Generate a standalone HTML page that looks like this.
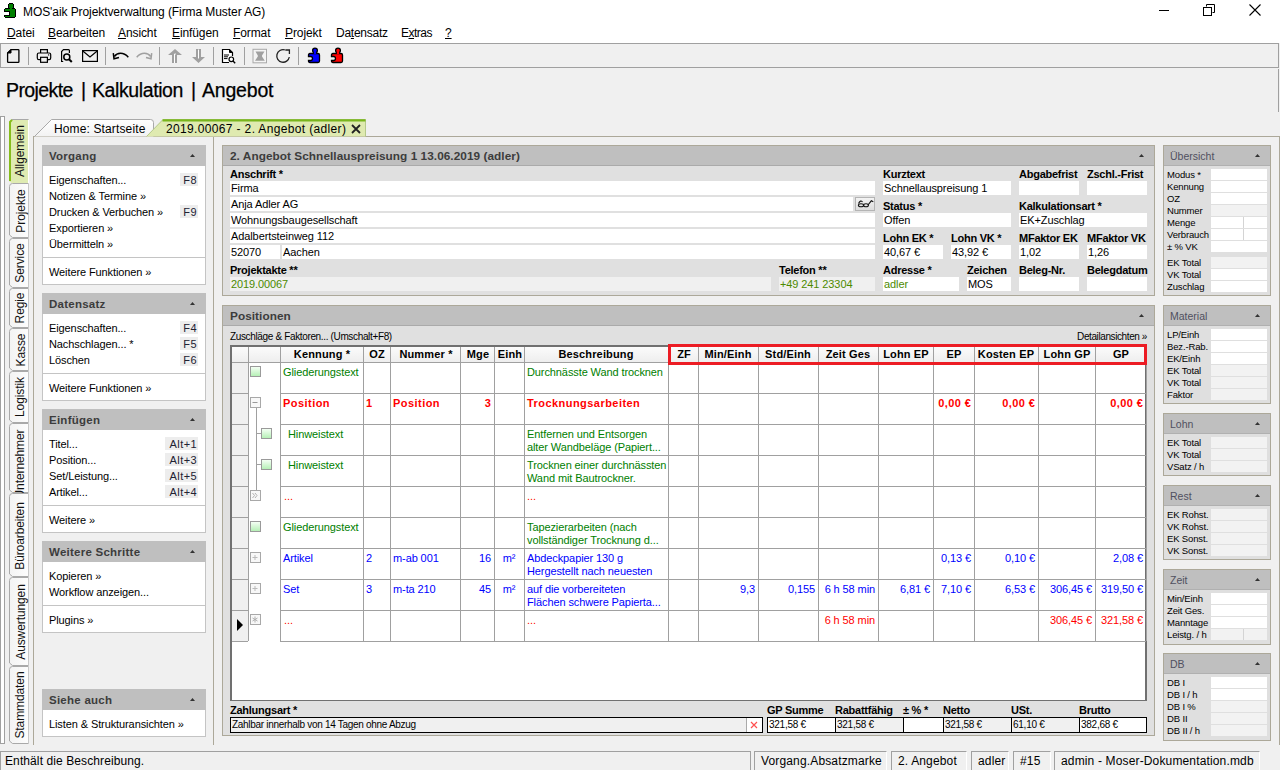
<!DOCTYPE html>
<html><head><meta charset="utf-8">
<style>
*{box-sizing:border-box;margin:0;padding:0}
html,body{width:1280px;height:770px;overflow:hidden;background:#f0f0f0;font-family:"Liberation Sans",sans-serif;font-size:11px;line-height:12px;color:#000;letter-spacing:-0.1px}
.a{position:absolute;white-space:nowrap}
.b{position:absolute}
svg{position:absolute;overflow:visible}
.hd{color:#3c3c3c}
</style></head><body>
<div class="b" style="left:0px;top:0px;width:1280px;height:23px;background:#fff"></div><div class="b" style="left:0px;top:23px;width:1280px;height:20px;background:#fff"></div><svg style="left:0px;top:0px" width="20" height="20" viewBox="0 0 20 20" shape-rendering="crispEdges">
<rect x="9" y="3" width="4" height="6" fill="#000"/><rect x="8" y="4" width="6" height="4" fill="#000"/>
<rect x="5" y="8" width="10" height="10" fill="#000"/><rect x="4" y="9" width="12" height="8" fill="#000"/>
<rect x="9" y="4" width="4" height="4" fill="#008000"/><rect x="10" y="8" width="2" height="1" fill="#008000"/>
<rect x="5" y="9" width="10" height="8" fill="#008000"/>
<rect x="4" y="11" width="6" height="5" fill="#000"/><rect x="4" y="12" width="5" height="3" fill="#fff"/>
</svg><div class="a " style="top:5px;font-size:12px;line-height:14px;left:23px;letter-spacing:-0.08px">MOS'aik Projektverwaltung (Firma Muster AG)</div><div class="b" style="left:1159px;top:10px;width:10px;height:1px;background:#000"></div><svg style="left:1203px;top:4px" width="12" height="12" viewBox="0 0 12 12"><path d="M3.5 2.5v-2h8v8h-2" fill="none" stroke="#000"/><rect x="0.5" y="3.5" width="8" height="8" fill="none" stroke="#000"/></svg><svg style="left:1249px;top:4px" width="12" height="12" viewBox="0 0 12 12"><path d="M0.5 0.5L11.5 11.5M11.5 0.5L0.5 11.5" stroke="#000" stroke-width="1.1"/></svg><div class="a " style="top:26px;font-size:12px;line-height:14px;left:7px;"><span style="text-decoration:underline;text-underline-offset:1px">D</span>atei</div><div class="a " style="top:26px;font-size:12px;line-height:14px;left:48px;"><span style="text-decoration:underline;text-underline-offset:1px">B</span>earbeiten</div><div class="a " style="top:26px;font-size:12px;line-height:14px;left:118px;"><span style="text-decoration:underline;text-underline-offset:1px">A</span>nsicht</div><div class="a " style="top:26px;font-size:12px;line-height:14px;left:172px;"><span style="text-decoration:underline;text-underline-offset:1px">E</span>infügen</div><div class="a " style="top:26px;font-size:12px;line-height:14px;left:233px;"><span style="text-decoration:underline;text-underline-offset:1px">F</span>ormat</div><div class="a " style="top:26px;font-size:12px;line-height:14px;left:285px;"><span style="text-decoration:underline;text-underline-offset:1px">P</span>rojekt</div><div class="a " style="top:26px;font-size:12px;line-height:14px;left:336px;letter-spacing:-0.25px">Da<span style="text-decoration:underline;text-underline-offset:1px">t</span>ensatz</div><div class="a " style="top:26px;font-size:12px;line-height:14px;left:401px;letter-spacing:-0.5px">E<span style="text-decoration:underline;text-underline-offset:1px">x</span>tras</div><div class="a " style="top:26px;font-size:12px;line-height:14px;left:445px;"><span style="text-decoration:underline;text-underline-offset:1px">?</span></div><div class="b" style="left:0px;top:43px;width:1280px;height:25px;background:#f0f0f0;border:1px solid #a0a0a0;border-right-color:#a0a0a0;width:1279px"></div><div class="b" style="left:28px;top:47px;width:1px;height:18px;background:#a0a0a0"></div><div class="b" style="left:105px;top:47px;width:1px;height:18px;background:#a0a0a0"></div><div class="b" style="left:159px;top:47px;width:1px;height:18px;background:#a0a0a0"></div><div class="b" style="left:213px;top:47px;width:1px;height:18px;background:#a0a0a0"></div><div class="b" style="left:244px;top:47px;width:1px;height:18px;background:#a0a0a0"></div><div class="b" style="left:298px;top:47px;width:1px;height:18px;background:#a0a0a0"></div><svg style="left:6px;top:48px" width="15" height="16" viewBox="0 0 15 16"><path d="M5 1.6H12.2Q12.9 1.6 12.9 2.3V13.7Q12.9 14.4 12.2 14.4H2.3Q1.6 14.4 1.6 13.7V5Z" fill="none" stroke="#000" stroke-width="1.3"/><path d="M1.6 5L5 1.6V5Z" fill="#000" stroke="#000" stroke-width="1"/></svg><svg style="left:36px;top:48px" width="16" height="16" viewBox="0 0 16 16"><path d="M4.6 5V1.7H11.4V5" fill="none" stroke="#000" stroke-width="1.2"/><rect x="1.3" y="5" width="13.4" height="6.6" rx="1.6" fill="none" stroke="#000" stroke-width="1.2"/><rect x="4.6" y="9.3" width="6.8" height="5" fill="#f0f0f0" stroke="#000" stroke-width="1.2"/><circle cx="12.6" cy="6.9" r="0.7" fill="#000"/></svg><svg style="left:60px;top:48px" width="14" height="16" viewBox="0 0 14 16"><path d="M3.2 13.5H1.6V3.5L3.5 1.6H8.5Q9.4 1.6 9.4 2.5V5" fill="none" stroke="#000" stroke-width="1.2"/><circle cx="6.8" cy="9" r="3" fill="none" stroke="#000" stroke-width="1.5"/><path d="M9 11.2L11.8 14" stroke="#000" stroke-width="2"/></svg><svg style="left:81px;top:49px" width="18" height="14" viewBox="0 0 18 14"><rect x="1.6" y="1.6" width="14.8" height="10.8" fill="none" stroke="#000" stroke-width="1.2"/><path d="M1.8 2L9 8L16.2 2" fill="none" stroke="#000" stroke-width="1.2"/></svg><svg style="left:112px;top:50px" width="18" height="12" viewBox="0 0 18 12"><path d="M2.3 6.5C5 2.5 11.5 1.8 16.3 7.2" fill="none" stroke="#000" stroke-width="1.5"/><path d="M1.3 3.2L2 8.8L7 7.6" fill="none" stroke="#000" stroke-width="1.5"/></svg><svg style="left:135px;top:50px" width="18" height="12" viewBox="0 0 18 12"><path d="M15.7 6.5C13 2.5 6.5 1.8 1.7 7.2" fill="none" stroke="#a0a0a0" stroke-width="1.5"/><path d="M16.7 3.2L16 8.8L11 7.6" fill="none" stroke="#a0a0a0" stroke-width="1.5"/></svg><svg style="left:160px;top:44px" width="50" height="24" viewBox="0 0 50 24"><path d="M15 5L8 11H12V19H17V11H22Z" fill="#a0a0a0"/><path d="M14.5 19V10H15.8" fill="none" stroke="#fff" stroke-width="1"/><path d="M36 5H41V13H45L38.5 19L32 13H36Z" fill="#a0a0a0"/><path d="M38.5 5.5V14.5" stroke="#fff" stroke-width="1"/></svg><svg style="left:221px;top:48px" width="16" height="16" viewBox="0 0 16 16"><path d="M8 14.5H1.5V1.5H8.5L11.5 4.5V8" fill="#fff" stroke="#000" stroke-width="1.2"/><path d="M8.5 1.5V4.5H11.5" fill="#000" stroke="#000" stroke-width="1"/><path d="M3 7h5M3 8.8h4M3 10.6h3.5" stroke="#000" stroke-width="1"/><circle cx="10.3" cy="11.3" r="2.3" fill="#fff" stroke="#000" stroke-width="1.2"/><path d="M12 13l2.2 2.2" stroke="#000" stroke-width="1.4"/></svg><svg style="left:252px;top:48px" width="16" height="16" viewBox="0 0 16 16"><rect x="1" y="1.3" width="13.5" height="13.5" fill="#f4f4f4" stroke="#a8a8a8" stroke-width="1"/><path d="M3.5 3.5H12.5L10 7.5V8.5L12.8 12.8H3L5.8 8.5V7.5Z" fill="#a0a0a0"/></svg><svg style="left:275px;top:48px" width="16" height="16" viewBox="0 0 16 16"><path d="M14.3 9A6.3 6.3 0 1 1 9.8 1.9" fill="none" stroke="#222" stroke-width="1.3"/><path d="M10.3 2H14.4V6" fill="none" stroke="#222" stroke-width="1.3"/></svg><svg style="left:307px;top:46px" width="14" height="18" viewBox="0 0 14 18"><path d="M3 7.5H11Q12.5 7.5 12.5 9V15Q12.5 16.5 11 16.5H3Q1.5 16.5 1.5 15V14.5H3.5A2 2 0 0 0 3.5 10.5H1.5V9Q1.5 7.5 3 7.5Z" fill="#0000ff" stroke="#000" stroke-width="1.3"/><circle cx="8" cy="4.5" r="2.4" fill="#0000ff" stroke="#000" stroke-width="1.3"/><rect x="6.9" y="6" width="2.2" height="2.2" fill="#0000ff"/></svg><svg style="left:330px;top:46px" width="14" height="18" viewBox="0 0 14 18"><path d="M3 7.5H11Q12.5 7.5 12.5 9V15Q12.5 16.5 11 16.5H3Q1.5 16.5 1.5 15V14.5H3.5A2 2 0 0 0 3.5 10.5H1.5V9Q1.5 7.5 3 7.5Z" fill="#ff0000" stroke="#000" stroke-width="1.3"/><circle cx="8" cy="4.5" r="2.4" fill="#ff0000" stroke="#000" stroke-width="1.3"/><rect x="6.9" y="6" width="2.2" height="2.2" fill="#ff0000"/></svg><div class="b" style="left:1278px;top:69px;width:1px;height:43px;background:#a0a0a0"></div><div class="a" style="left:6px;top:79px;font-size:19.5px;line-height:22px;-webkit-text-stroke:0.25px #000;letter-spacing:-0.6px">Projekte</div><div class="a" style="left:81px;top:79px;font-size:19.5px;line-height:22px;-webkit-text-stroke:0.25px #000;">|</div><div class="a" style="left:92px;top:79px;font-size:19.5px;line-height:22px;-webkit-text-stroke:0.25px #000;letter-spacing:-0.4px">Kalkulation</div><div class="a" style="left:191px;top:79px;font-size:19.5px;line-height:22px;-webkit-text-stroke:0.25px #000;">|</div><div class="a" style="left:202px;top:79px;font-size:19.5px;line-height:22px;-webkit-text-stroke:0.25px #000;letter-spacing:-0.2px">Angebot</div><div class="b" style="left:33px;top:136px;width:1247px;height:1px;background:#aca899"></div><div class="b" style="left:1279px;top:136px;width:1px;height:609px;background:#aca899"></div><svg style="left:30px;top:116px" width="130" height="22" viewBox="0 0 130 22">
<defs><linearGradient id="hg" x1="0" y1="0" x2="0" y2="1"><stop offset="0" stop-color="#ffffff"/><stop offset="1" stop-color="#f2f2f2"/></linearGradient></defs>
<path d="M4.5 20.5L21.5 3.5H120.5Q123.5 3.5 123.5 6.5V20.5" fill="url(#hg)" stroke="#a9a9a9" stroke-width="1"/></svg><div class="a " style="top:122px;font-size:12px;line-height:14px;left:54px;letter-spacing:0.13px">Home: Startseite</div><svg style="left:144px;top:116px" width="226" height="22" viewBox="0 0 226 22">
<path d="M2.5 20.5L19 3.5H221.5V20.5" fill="#dfeab0" stroke="#b5c98a" stroke-width="1"/>
<path d="M18.5 4.3H221.5" stroke="#79b51c" stroke-width="2.2"/></svg><div class="a " style="top:122px;font-size:12px;line-height:14px;left:166px;letter-spacing:0.35px">2019.00067 - 2. Angebot (adler)</div><svg style="left:351px;top:124px" width="10" height="10" viewBox="0 0 10 10"><path d="M1 1L9 9M9 1L1 9" stroke="#222" stroke-width="1.8"/></svg><div class="b" style="left:0px;top:116px;width:5px;height:628px;background:#fff;border:1px solid #a0a0a0"></div><div class="b" style="left:33px;top:136px;width:1px;height:609px;background:#aca899"></div><svg style="left:0px;top:119px" width="33" height="65" viewBox="0 0 33 65"><path d="M11.5 0H28.5V64H11.5L9 62V3Z" fill="#dfebb2"/><path d="M11.5 0.5H28.5" stroke="#a8a8a8"/><path d="M10 62V3L12 0.8" fill="none" stroke="#86bd1c" stroke-width="2"/><path d="M28.5 1V64" stroke="#fff"/></svg><div class="a" style="left:-12.0px;top:145.0px;width:64px;text-align:center;transform:rotate(-90deg);font-size:12px;line-height:12px;color:#111">Allgemein</div><svg style="left:0px;top:183px" width="33" height="56" viewBox="0 0 33 56"><defs><linearGradient id="vg183" x1="0" y1="0" x2="1" y2="0"><stop offset="0" stop-color="#f3f3f3"/><stop offset="1" stop-color="#fdfdfd"/></linearGradient></defs><path d="M28.5 0.5H12.5Q9.5 0.5 9.5 3.5V52L12.5 55H28.5Z" fill="url(#vg183)"/><path d="M28.5 0.5H12.5Q9.5 0.5 9.5 3.5V52L12.5 54.5H28.5" fill="none" stroke="#a9a9a9"/><path d="M28.5 1V55" stroke="#c8c8c8"/></svg><div class="a" style="left:-7.5px;top:204.5px;width:55px;text-align:center;transform:rotate(-90deg);font-size:12px;line-height:12px;color:#111">Projekte</div><svg style="left:0px;top:238px" width="33" height="51" viewBox="0 0 33 51"><defs><linearGradient id="vg238" x1="0" y1="0" x2="1" y2="0"><stop offset="0" stop-color="#f3f3f3"/><stop offset="1" stop-color="#fdfdfd"/></linearGradient></defs><path d="M28.5 0.5H12.5Q9.5 0.5 9.5 3.5V47L12.5 50H28.5Z" fill="url(#vg238)"/><path d="M28.5 0.5H12.5Q9.5 0.5 9.5 3.5V47L12.5 49.5H28.5" fill="none" stroke="#a9a9a9"/><path d="M28.5 1V50" stroke="#c8c8c8"/></svg><div class="a" style="left:-5.0px;top:257.0px;width:50px;text-align:center;transform:rotate(-90deg);font-size:12px;line-height:12px;color:#111">Service</div><svg style="left:0px;top:288px" width="33" height="41" viewBox="0 0 33 41"><defs><linearGradient id="vg288" x1="0" y1="0" x2="1" y2="0"><stop offset="0" stop-color="#f3f3f3"/><stop offset="1" stop-color="#fdfdfd"/></linearGradient></defs><path d="M28.5 0.5H12.5Q9.5 0.5 9.5 3.5V37L12.5 40H28.5Z" fill="url(#vg288)"/><path d="M28.5 0.5H12.5Q9.5 0.5 9.5 3.5V37L12.5 39.5H28.5" fill="none" stroke="#a9a9a9"/><path d="M28.5 1V40" stroke="#c8c8c8"/></svg><div class="a" style="left:0.0px;top:302.0px;width:40px;text-align:center;transform:rotate(-90deg);font-size:12px;line-height:12px;color:#111">Regie</div><svg style="left:0px;top:328px" width="33" height="44" viewBox="0 0 33 44"><defs><linearGradient id="vg328" x1="0" y1="0" x2="1" y2="0"><stop offset="0" stop-color="#f3f3f3"/><stop offset="1" stop-color="#fdfdfd"/></linearGradient></defs><path d="M28.5 0.5H12.5Q9.5 0.5 9.5 3.5V40L12.5 43H28.5Z" fill="url(#vg328)"/><path d="M28.5 0.5H12.5Q9.5 0.5 9.5 3.5V40L12.5 42.5H28.5" fill="none" stroke="#a9a9a9"/><path d="M28.5 1V43" stroke="#c8c8c8"/></svg><div class="a" style="left:-1.5px;top:343.5px;width:43px;text-align:center;transform:rotate(-90deg);font-size:12px;line-height:12px;color:#111">Kasse</div><svg style="left:0px;top:371px" width="33" height="53" viewBox="0 0 33 53"><defs><linearGradient id="vg371" x1="0" y1="0" x2="1" y2="0"><stop offset="0" stop-color="#f3f3f3"/><stop offset="1" stop-color="#fdfdfd"/></linearGradient></defs><path d="M28.5 0.5H12.5Q9.5 0.5 9.5 3.5V49L12.5 52H28.5Z" fill="url(#vg371)"/><path d="M28.5 0.5H12.5Q9.5 0.5 9.5 3.5V49L12.5 51.5H28.5" fill="none" stroke="#a9a9a9"/><path d="M28.5 1V52" stroke="#c8c8c8"/></svg><div class="a" style="left:-6.0px;top:391.0px;width:52px;text-align:center;transform:rotate(-90deg);font-size:12px;line-height:12px;color:#111">Logistik</div><svg style="left:0px;top:423px" width="33" height="71" viewBox="0 0 33 71"><defs><linearGradient id="vg423" x1="0" y1="0" x2="1" y2="0"><stop offset="0" stop-color="#f3f3f3"/><stop offset="1" stop-color="#fdfdfd"/></linearGradient></defs><path d="M28.5 0.5H12.5Q9.5 0.5 9.5 3.5V67L12.5 70H28.5Z" fill="url(#vg423)"/><path d="M28.5 0.5H12.5Q9.5 0.5 9.5 3.5V67L12.5 69.5H28.5" fill="none" stroke="#a9a9a9"/><path d="M28.5 1V70" stroke="#c8c8c8"/></svg><div class="a" style="left:-15.0px;top:458.0px;width:70px;text-align:center;transform:rotate(-90deg);font-size:12px;line-height:12px;color:#111">Unternehmer</div><svg style="left:0px;top:493px" width="33" height="85" viewBox="0 0 33 85"><defs><linearGradient id="vg493" x1="0" y1="0" x2="1" y2="0"><stop offset="0" stop-color="#f3f3f3"/><stop offset="1" stop-color="#fdfdfd"/></linearGradient></defs><path d="M28.5 0.5H12.5Q9.5 0.5 9.5 3.5V81L12.5 84H28.5Z" fill="url(#vg493)"/><path d="M28.5 0.5H12.5Q9.5 0.5 9.5 3.5V81L12.5 83.5H28.5" fill="none" stroke="#a9a9a9"/><path d="M28.5 1V84" stroke="#c8c8c8"/></svg><div class="a" style="left:-22.0px;top:530.0px;width:84px;text-align:center;transform:rotate(-90deg);font-size:12px;line-height:12px;color:#111">Büroarbeiten</div><svg style="left:0px;top:577px" width="33" height="90" viewBox="0 0 33 90"><defs><linearGradient id="vg577" x1="0" y1="0" x2="1" y2="0"><stop offset="0" stop-color="#f3f3f3"/><stop offset="1" stop-color="#fdfdfd"/></linearGradient></defs><path d="M28.5 0.5H12.5Q9.5 0.5 9.5 3.5V86L12.5 89H28.5Z" fill="url(#vg577)"/><path d="M28.5 0.5H12.5Q9.5 0.5 9.5 3.5V86L12.5 88.5H28.5" fill="none" stroke="#a9a9a9"/><path d="M28.5 1V89" stroke="#c8c8c8"/></svg><div class="a" style="left:-24.5px;top:615.5px;width:89px;text-align:center;transform:rotate(-90deg);font-size:12px;line-height:12px;color:#111">Auswertungen</div><svg style="left:0px;top:666px" width="33" height="79" viewBox="0 0 33 79"><defs><linearGradient id="vg666" x1="0" y1="0" x2="1" y2="0"><stop offset="0" stop-color="#f3f3f3"/><stop offset="1" stop-color="#fdfdfd"/></linearGradient></defs><path d="M28.5 0.5H12.5Q9.5 0.5 9.5 3.5V75L12.5 78H28.5Z" fill="url(#vg666)"/><path d="M28.5 0.5H12.5Q9.5 0.5 9.5 3.5V75L12.5 77.5H28.5" fill="none" stroke="#a9a9a9"/><path d="M28.5 1V78" stroke="#c8c8c8"/></svg><div class="a" style="left:-19.0px;top:699.0px;width:78px;text-align:center;transform:rotate(-90deg);font-size:12px;line-height:12px;color:#111">Stammdaten</div><div class="b" style="left:213px;top:137px;width:1px;height:608px;background:#aca899"></div><div class="b" style="left:42px;top:145px;width:164px;height:21px;background:#bfbfbf"></div><div class="a hd" style="top:150px;font-weight:bold;left:49px;font-size:11.5px;letter-spacing:0.25px">Vorgang</div><svg style="left:190px;top:154px" width="5" height="3" viewBox="0 0 5 3"><path d="M0 3L2.5 0 5 3z" fill="#333"/></svg><div class="b" style="left:42px;top:166px;width:164px;height:119px;background:#fff;border:1px solid #c4c4c4;border-top:0"></div><div class="a " style="top:174px;left:49px;">Eigenschaften...</div><div class="b" style="left:180px;top:173px;width:18px;height:13px;background:#ededed"></div><div class="a " style="top:174px;color:#223;left:-203px;width:400px;text-align:right;letter-spacing:0.4px">F8</div><div class="a " style="top:190px;left:49px;">Notizen &amp; Termine »</div><div class="a " style="top:206px;left:49px;">Drucken &amp; Verbuchen »</div><div class="b" style="left:180px;top:205px;width:18px;height:13px;background:#ededed"></div><div class="a " style="top:206px;color:#223;left:-203px;width:400px;text-align:right;letter-spacing:0.4px">F9</div><div class="a " style="top:222px;left:49px;">Exportieren »</div><div class="a " style="top:238px;left:49px;">Übermitteln »</div><div class="b" style="left:43px;top:257px;width:162px;height:1px;background:#c4c4c4"></div><div class="a " style="top:266px;left:49px;">Weitere Funktionen »</div><div class="b" style="left:42px;top:293px;width:164px;height:21px;background:#bfbfbf"></div><div class="a hd" style="top:298px;font-weight:bold;left:49px;font-size:11.5px;letter-spacing:0.25px">Datensatz</div><svg style="left:190px;top:302px" width="5" height="3" viewBox="0 0 5 3"><path d="M0 3L2.5 0 5 3z" fill="#333"/></svg><div class="b" style="left:42px;top:314px;width:164px;height:87px;background:#fff;border:1px solid #c4c4c4;border-top:0"></div><div class="a " style="top:322px;left:49px;">Eigenschaften...</div><div class="b" style="left:180px;top:321px;width:18px;height:13px;background:#ededed"></div><div class="a " style="top:322px;color:#223;left:-203px;width:400px;text-align:right;letter-spacing:0.4px">F4</div><div class="a " style="top:338px;left:49px;">Nachschlagen... *</div><div class="b" style="left:180px;top:337px;width:18px;height:13px;background:#ededed"></div><div class="a " style="top:338px;color:#223;left:-203px;width:400px;text-align:right;letter-spacing:0.4px">F5</div><div class="a " style="top:354px;left:49px;">Löschen</div><div class="b" style="left:180px;top:353px;width:18px;height:13px;background:#ededed"></div><div class="a " style="top:354px;color:#223;left:-203px;width:400px;text-align:right;letter-spacing:0.4px">F6</div><div class="b" style="left:43px;top:373px;width:162px;height:1px;background:#c4c4c4"></div><div class="a " style="top:382px;left:49px;">Weitere Funktionen »</div><div class="b" style="left:42px;top:409px;width:164px;height:21px;background:#bfbfbf"></div><div class="a hd" style="top:414px;font-weight:bold;left:49px;font-size:11.5px;letter-spacing:0.25px">Einfügen</div><svg style="left:190px;top:418px" width="5" height="3" viewBox="0 0 5 3"><path d="M0 3L2.5 0 5 3z" fill="#333"/></svg><div class="b" style="left:42px;top:430px;width:164px;height:103px;background:#fff;border:1px solid #c4c4c4;border-top:0"></div><div class="a " style="top:438px;left:49px;">Titel...</div><div class="b" style="left:165px;top:437px;width:33px;height:13px;background:#ededed"></div><div class="a " style="top:438px;color:#223;left:-203px;width:400px;text-align:right;letter-spacing:0.4px">Alt+1</div><div class="a " style="top:454px;left:49px;">Position...</div><div class="b" style="left:165px;top:453px;width:33px;height:13px;background:#ededed"></div><div class="a " style="top:454px;color:#223;left:-203px;width:400px;text-align:right;letter-spacing:0.4px">Alt+3</div><div class="a " style="top:470px;left:49px;">Set/Leistung...</div><div class="b" style="left:165px;top:469px;width:33px;height:13px;background:#ededed"></div><div class="a " style="top:470px;color:#223;left:-203px;width:400px;text-align:right;letter-spacing:0.4px">Alt+5</div><div class="a " style="top:486px;left:49px;">Artikel...</div><div class="b" style="left:165px;top:485px;width:33px;height:13px;background:#ededed"></div><div class="a " style="top:486px;color:#223;left:-203px;width:400px;text-align:right;letter-spacing:0.4px">Alt+4</div><div class="b" style="left:43px;top:505px;width:162px;height:1px;background:#c4c4c4"></div><div class="a " style="top:514px;left:49px;">Weitere »</div><div class="b" style="left:42px;top:541px;width:164px;height:21px;background:#bfbfbf"></div><div class="a hd" style="top:546px;font-weight:bold;left:49px;font-size:11.5px;letter-spacing:0.25px">Weitere Schritte</div><svg style="left:190px;top:550px" width="5" height="3" viewBox="0 0 5 3"><path d="M0 3L2.5 0 5 3z" fill="#333"/></svg><div class="b" style="left:42px;top:562px;width:164px;height:71px;background:#fff;border:1px solid #c4c4c4;border-top:0"></div><div class="a " style="top:570px;left:49px;">Kopieren »</div><div class="a " style="top:586px;left:49px;">Workflow anzeigen...</div><div class="b" style="left:43px;top:605px;width:162px;height:1px;background:#c4c4c4"></div><div class="a " style="top:614px;left:49px;">Plugins »</div><div class="b" style="left:42px;top:689px;width:164px;height:21px;background:#bfbfbf"></div><div class="a hd" style="top:694px;font-weight:bold;left:49px;font-size:11.5px;letter-spacing:0.25px">Siehe auch</div><svg style="left:190px;top:698px" width="5" height="3" viewBox="0 0 5 3"><path d="M0 3L2.5 0 5 3z" fill="#333"/></svg><div class="b" style="left:42px;top:710px;width:164px;height:27px;background:#fff;border:1px solid #c4c4c4;border-top:0"></div><div class="a " style="top:718px;left:49px;">Listen &amp; Strukturansichten »</div><div class="b" style="left:0px;top:750px;width:1280px;height:20px;background:#f0f0f0"></div><div class="b" style="left:0px;top:751px;width:751px;height:19px;border-top:1px solid #a0a0a0;border-left:1px solid #a0a0a0;border-right:1px solid #a0a0a0"></div><div class="a " style="top:754px;font-size:12px;line-height:14px;left:5px;letter-spacing:0.1px">Enthält die Beschreibung.</div><div class="b" style="left:754px;top:751px;width:133px;height:19px;border-top:1px solid #a0a0a0;border-left:1px solid #a0a0a0;border-right:1px solid #fff"></div><div class="a " style="top:754px;font-size:12px;line-height:14px;left:761px;letter-spacing:0.15px">Vorgang.Absatzmarke</div><div class="b" style="left:891px;top:751px;width:76px;height:19px;border-top:1px solid #a0a0a0;border-left:1px solid #a0a0a0;border-right:1px solid #fff"></div><div class="a " style="top:754px;font-size:12px;line-height:14px;left:898px;letter-spacing:0.15px">2. Angebot</div><div class="b" style="left:971px;top:751px;width:38px;height:19px;border-top:1px solid #a0a0a0;border-left:1px solid #a0a0a0;border-right:1px solid #fff"></div><div class="a " style="top:754px;font-size:12px;line-height:14px;left:978px;letter-spacing:0.15px">adler</div><div class="b" style="left:1013px;top:751px;width:38px;height:19px;border-top:1px solid #a0a0a0;border-left:1px solid #a0a0a0;border-right:1px solid #fff"></div><div class="a " style="top:754px;font-size:12px;line-height:14px;left:1020px;letter-spacing:0.15px">#15</div><div class="b" style="left:1054px;top:751px;width:206px;height:19px;border-top:1px solid #a0a0a0;border-left:1px solid #a0a0a0;border-right:1px solid #fff"></div><div class="a " style="top:754px;font-size:12px;line-height:14px;left:1061px;letter-spacing:0.15px">admin - Moser-Dokumentation.mdb</div><div class="b" style="left:222px;top:145px;width:933px;height:151px;background:#e0e0e0;border:1px solid #aca899"></div><div class="b" style="left:223px;top:146px;width:931px;height:20px;background:#bfbfbf;border-bottom:1px solid #aaa"></div><div class="a hd" style="top:150px;font-weight:bold;left:230px;font-size:11.8px;letter-spacing:0.05px">2. Angebot Schnellauspreisung 1 13.06.2019 (adler)</div><svg style="left:1139px;top:154px" width="5" height="3" viewBox="0 0 5 3"><path d="M0 3L2.5 0 5 3z" fill="#333"/></svg><div class="a " style="top:168px;font-weight:bold;left:230px;letter-spacing:-0.25px">Anschrift *</div><div class="b" style="left:230px;top:181px;width:645px;height:14px;background:#fff;"></div><div class="a " style="top:182px;color:#000;left:231px;">Firma</div><div class="b" style="left:230px;top:197px;width:623px;height:14px;background:#fff;"></div><div class="a " style="top:198px;color:#000;left:231px;">Anja Adler AG</div><svg style="left:855px;top:197px" width="20" height="14" viewBox="0 0 20 14">
<defs><linearGradient id="bg1" x1="0" y1="0" x2="0" y2="1"><stop offset="0" stop-color="#f4f4f4"/><stop offset="1" stop-color="#dcdcdc"/></linearGradient></defs>
<rect x="0.5" y="0.5" width="19" height="13" fill="url(#bg1)" stroke="#b4b4b4"/>
<path d="M3.5 6.5Q5.5 2.5 7.5 5" fill="none" stroke="#111" stroke-width="1.1"/><ellipse cx="6" cy="8.3" rx="2.6" ry="1.5" fill="none" stroke="#111" stroke-width="1.1"/><ellipse cx="11" cy="8.3" rx="2.4" ry="1.5" fill="none" stroke="#111" stroke-width="1.1"/><path d="M13 8L16.3 3.8L18.3 4.8" fill="none" stroke="#111" stroke-width="1.1"/></svg><div class="b" style="left:230px;top:213px;width:645px;height:14px;background:#fff;"></div><div class="a " style="top:214px;color:#000;left:231px;">Wohnungsbaugesellschaft</div><div class="b" style="left:230px;top:229px;width:645px;height:14px;background:#fff;"></div><div class="a " style="top:230px;color:#000;left:231px;">Adalbertsteinweg 112</div><div class="b" style="left:230px;top:245px;width:50px;height:14px;background:#fff;"></div><div class="a " style="top:246px;color:#000;left:231px;">52070</div><div class="b" style="left:282px;top:245px;width:593px;height:14px;background:#fff;"></div><div class="a " style="top:246px;color:#000;left:283px;">Aachen</div><div class="a " style="top:264px;font-weight:bold;left:230px;letter-spacing:-0.25px">Projektakte **</div><div class="b" style="left:230px;top:277px;width:541px;height:14px;background:#f0f0f0;"></div><div class="a " style="top:278px;color:#4d8a00;left:231px;">2019.00067</div><div class="a " style="top:264px;font-weight:bold;left:779px;letter-spacing:-0.25px">Telefon **</div><div class="b" style="left:779px;top:277px;width:96px;height:14px;background:#f0f0f0;"></div><div class="a " style="top:278px;color:#4d8a00;left:780px;">+49 241 23304</div><div class="a " style="top:168px;font-weight:bold;left:883px;letter-spacing:-0.25px">Kurztext</div><div class="b" style="left:883px;top:181px;width:128px;height:14px;background:#fff;"></div><div class="a " style="top:182px;color:#000;left:884px;">Schnellauspreisung 1</div><div class="a " style="top:168px;font-weight:bold;left:1019px;letter-spacing:-0.25px">Abgabefrist</div><div class="b" style="left:1019px;top:181px;width:60px;height:14px;background:#fff;"></div><div class="a " style="top:168px;font-weight:bold;left:1087px;letter-spacing:-0.25px">Zschl.-Frist</div><div class="b" style="left:1087px;top:181px;width:60px;height:14px;background:#fff;"></div><div class="a " style="top:200px;font-weight:bold;left:883px;letter-spacing:-0.25px">Status *</div><div class="b" style="left:883px;top:213px;width:128px;height:14px;background:#fff;"></div><div class="a " style="top:214px;color:#000;left:884px;">Offen</div><div class="a " style="top:200px;font-weight:bold;left:1019px;letter-spacing:-0.25px">Kalkulationsart *</div><div class="b" style="left:1019px;top:213px;width:128px;height:14px;background:#fff;"></div><div class="a " style="top:214px;color:#000;left:1020px;">EK+Zuschlag</div><div class="a " style="top:232px;font-weight:bold;left:883px;letter-spacing:-0.25px">Lohn EK *</div><div class="b" style="left:883px;top:245px;width:60px;height:14px;background:#fff;"></div><div class="a " style="top:246px;color:#000;left:884px;">40,67 €</div><div class="a " style="top:232px;font-weight:bold;left:951px;letter-spacing:-0.25px">Lohn VK *</div><div class="b" style="left:951px;top:245px;width:60px;height:14px;background:#fff;"></div><div class="a " style="top:246px;color:#000;left:952px;">43,92 €</div><div class="a " style="top:232px;font-weight:bold;left:1019px;letter-spacing:-0.25px">MFaktor EK</div><div class="b" style="left:1019px;top:245px;width:60px;height:14px;background:#fff;"></div><div class="a " style="top:246px;color:#000;left:1020px;">1,02</div><div class="a " style="top:232px;font-weight:bold;left:1087px;letter-spacing:-0.25px">MFaktor VK</div><div class="b" style="left:1087px;top:245px;width:60px;height:14px;background:#fff;"></div><div class="a " style="top:246px;color:#000;left:1088px;">1,26</div><div class="a " style="top:264px;font-weight:bold;left:883px;letter-spacing:-0.25px">Adresse *</div><div class="b" style="left:883px;top:277px;width:76px;height:14px;background:#fff;"></div><div class="a " style="top:278px;color:#4d8a00;left:884px;">adler</div><div class="a " style="top:264px;font-weight:bold;left:967px;letter-spacing:-0.25px">Zeichen</div><div class="b" style="left:967px;top:277px;width:44px;height:14px;background:#fff;"></div><div class="a " style="top:278px;color:#000;left:968px;">MOS</div><div class="a " style="top:264px;font-weight:bold;left:1019px;letter-spacing:-0.25px">Beleg-Nr.</div><div class="b" style="left:1019px;top:277px;width:60px;height:14px;background:#fff;"></div><div class="a " style="top:264px;font-weight:bold;left:1087px;letter-spacing:-0.25px">Belegdatum</div><div class="b" style="left:1087px;top:277px;width:60px;height:14px;background:#fff;"></div><div class="b" style="left:222px;top:305px;width:933px;height:431px;background:#e0e0e0;border:1px solid #aca899"></div><div class="b" style="left:223px;top:306px;width:931px;height:20px;background:#bfbfbf;border-bottom:1px solid #aaa"></div><div class="a hd" style="top:310px;font-weight:bold;left:230px;font-size:11.8px;letter-spacing:0.05px">Positionen</div><svg style="left:1139px;top:314px" width="5" height="3" viewBox="0 0 5 3"><path d="M0 3L2.5 0 5 3z" fill="#333"/></svg><div class="a " style="top:331px;left:230px;font-size:10px;letter-spacing:-0.35px">Zuschläge &amp; Faktoren... (Umschalt+F8)</div><div class="a " style="top:331px;left:747px;width:400px;text-align:right;font-size:10px;letter-spacing:-0.4px">Detailansichten »</div><div class="b" style="left:230px;top:345px;width:917px;height:356px;background:#fff;border:2px solid #707070;border-bottom:1px solid #707070"></div><div class="b" style="left:232px;top:347px;width:16px;height:294px;background:#f0f0f0"></div><div class="b" style="left:232px;top:347px;width:914px;height:15px;background:linear-gradient(#fbfbfb,#eeeeee)"></div><div class="b" style="left:248px;top:347px;width:1px;height:294px;background:#a0a0a0"></div><div class="b" style="left:280px;top:347px;width:1px;height:294px;background:#a0a0a0"></div><div class="b" style="left:363px;top:347px;width:1px;height:294px;background:#a0a0a0"></div><div class="b" style="left:390px;top:347px;width:1px;height:294px;background:#a0a0a0"></div><div class="b" style="left:460px;top:347px;width:1px;height:294px;background:#a0a0a0"></div><div class="b" style="left:494px;top:347px;width:1px;height:294px;background:#a0a0a0"></div><div class="b" style="left:524px;top:347px;width:1px;height:294px;background:#a0a0a0"></div><div class="b" style="left:668px;top:347px;width:1px;height:294px;background:#a0a0a0"></div><div class="b" style="left:698px;top:347px;width:1px;height:294px;background:#a0a0a0"></div><div class="b" style="left:758px;top:347px;width:1px;height:294px;background:#a0a0a0"></div><div class="b" style="left:818px;top:347px;width:1px;height:294px;background:#a0a0a0"></div><div class="b" style="left:878px;top:347px;width:1px;height:294px;background:#a0a0a0"></div><div class="b" style="left:933px;top:347px;width:1px;height:294px;background:#a0a0a0"></div><div class="b" style="left:974px;top:347px;width:1px;height:294px;background:#a0a0a0"></div><div class="b" style="left:1038px;top:347px;width:1px;height:294px;background:#a0a0a0"></div><div class="b" style="left:1095px;top:347px;width:1px;height:294px;background:#a0a0a0"></div><div class="b" style="left:1146px;top:347px;width:1px;height:294px;background:#a0a0a0"></div><div class="b" style="left:232px;top:362px;width:914px;height:1px;background:#a0a0a0"></div><div class="b" style="left:232px;top:393px;width:16px;height:1px;background:#a0a0a0"></div><div class="b" style="left:280px;top:393px;width:866px;height:1px;background:#a0a0a0"></div><div class="b" style="left:232px;top:424px;width:16px;height:1px;background:#a0a0a0"></div><div class="b" style="left:280px;top:424px;width:866px;height:1px;background:#a0a0a0"></div><div class="b" style="left:232px;top:455px;width:16px;height:1px;background:#a0a0a0"></div><div class="b" style="left:280px;top:455px;width:866px;height:1px;background:#a0a0a0"></div><div class="b" style="left:232px;top:486px;width:16px;height:1px;background:#a0a0a0"></div><div class="b" style="left:280px;top:486px;width:866px;height:1px;background:#a0a0a0"></div><div class="b" style="left:232px;top:517px;width:16px;height:1px;background:#a0a0a0"></div><div class="b" style="left:280px;top:517px;width:866px;height:1px;background:#a0a0a0"></div><div class="b" style="left:232px;top:548px;width:16px;height:1px;background:#a0a0a0"></div><div class="b" style="left:280px;top:548px;width:866px;height:1px;background:#a0a0a0"></div><div class="b" style="left:232px;top:579px;width:16px;height:1px;background:#a0a0a0"></div><div class="b" style="left:280px;top:579px;width:866px;height:1px;background:#a0a0a0"></div><div class="b" style="left:232px;top:610px;width:16px;height:1px;background:#a0a0a0"></div><div class="b" style="left:280px;top:610px;width:866px;height:1px;background:#a0a0a0"></div><div class="b" style="left:232px;top:641px;width:16px;height:1px;background:#a0a0a0"></div><div class="b" style="left:280px;top:641px;width:866px;height:1px;background:#a0a0a0"></div><div class="a " style="top:348px;font-weight:bold;left:122px;width:400px;text-align:center;letter-spacing:0.15px">Kennung *</div><div class="a " style="top:348px;font-weight:bold;left:177px;width:400px;text-align:center;letter-spacing:0.15px">OZ</div><div class="a " style="top:348px;font-weight:bold;left:226px;width:400px;text-align:center;letter-spacing:0.15px">Nummer *</div><div class="a " style="top:348px;font-weight:bold;left:278px;width:400px;text-align:center;letter-spacing:0.15px">Mge</div><div class="a " style="top:348px;font-weight:bold;left:310px;width:400px;text-align:center;letter-spacing:0.15px">Einh</div><div class="a " style="top:348px;font-weight:bold;left:396px;width:400px;text-align:center;letter-spacing:0.15px">Beschreibung</div><div class="a " style="top:348px;font-weight:bold;left:484px;width:400px;text-align:center;letter-spacing:0.15px">ZF</div><div class="a " style="top:348px;font-weight:bold;left:528px;width:400px;text-align:center;letter-spacing:0.15px">Min/Einh</div><div class="a " style="top:348px;font-weight:bold;left:588px;width:400px;text-align:center;letter-spacing:0.15px">Std/Einh</div><div class="a " style="top:348px;font-weight:bold;left:648px;width:400px;text-align:center;letter-spacing:0.15px">Zeit Ges</div><div class="a " style="top:348px;font-weight:bold;left:706px;width:400px;text-align:center;letter-spacing:0.15px">Lohn EP</div><div class="a " style="top:348px;font-weight:bold;left:754px;width:400px;text-align:center;letter-spacing:0.15px">EP</div><div class="a " style="top:348px;font-weight:bold;left:806px;width:400px;text-align:center;letter-spacing:0.15px">Kosten EP</div><div class="a " style="top:348px;font-weight:bold;left:867px;width:400px;text-align:center;letter-spacing:0.15px">Lohn GP</div><div class="a " style="top:348px;font-weight:bold;left:921px;width:400px;text-align:center;letter-spacing:0.15px">GP</div><div class="b" style="left:668px;top:344px;width:479px;height:21px;border:3px solid #ec1c24"></div><div class="b" style="left:256px;top:408px;width:1px;height:83px;background:#a0a0a0"></div><div class="b" style="left:257px;top:433px;width:4px;height:1px;background:#a0a0a0"></div><div class="b" style="left:257px;top:464px;width:4px;height:1px;background:#a0a0a0"></div><div class="b" style="left:250px;top:366px;width:11px;height:11px;border:1px solid #9a9a9a;background:linear-gradient(#f4fff4,#b6f0b6)"></div><svg style="left:250px;top:397px" width="11" height="11" viewBox="0 0 11 11"><rect x="0.5" y="0.5" width="10" height="10" fill="#f8f8f8" stroke="#a8a8a8"/><path d="M2.5 5.5h5" stroke="#999"/></svg><div class="b" style="left:261px;top:428px;width:11px;height:11px;border:1px solid #9a9a9a;background:linear-gradient(#f4fff4,#b6f0b6)"></div><div class="b" style="left:261px;top:459px;width:11px;height:11px;border:1px solid #9a9a9a;background:linear-gradient(#f4fff4,#b6f0b6)"></div><svg style="left:250px;top:490px" width="11" height="11" viewBox="0 0 11 11"><rect x="0.5" y="0.5" width="10" height="10" fill="#f8f8f8" stroke="#a8a8a8"/><path d="M2.5 3l2 2.5-2 2.5M5 3l2 2.5-2 2.5" fill="none" stroke="#aaa" stroke-width="0.9"/></svg><div class="b" style="left:250px;top:521px;width:11px;height:11px;border:1px solid #9a9a9a;background:linear-gradient(#f4fff4,#b6f0b6)"></div><svg style="left:250px;top:552px" width="11" height="11" viewBox="0 0 11 11"><rect x="0.5" y="0.5" width="10" height="10" fill="#f8f8f8" stroke="#a8a8a8"/><path d="M2.5 5.5h5M5 3v5" stroke="#bbb"/></svg><svg style="left:250px;top:583px" width="11" height="11" viewBox="0 0 11 11"><rect x="0.5" y="0.5" width="10" height="10" fill="#f8f8f8" stroke="#a8a8a8"/><path d="M2.5 5.5h5M5 3v5" stroke="#bbb"/></svg><svg style="left:250px;top:614px" width="11" height="11" viewBox="0 0 11 11"><rect x="0.5" y="0.5" width="10" height="10" fill="#f8f8f8" stroke="#a8a8a8"/><path d="M5 2.5v6M2.5 4l5 3M7.5 4l-5 3" stroke="#aaa" stroke-width="0.9"/></svg><svg style="left:237px;top:619px" width="6" height="12" viewBox="0 0 6 12"><path d="M0 0L6 6 0 12z" fill="#000"/></svg><div class="a " style="top:366px;color:#008000;left:283px;">Gliederungstext</div><div class="a " style="top:366px;color:#008000;left:527px;">Durchnässte Wand trocknen</div><div class="a " style="top:397px;font-weight:bold;color:#ff0000;left:283px;letter-spacing:0.45px;">Position</div><div class="a " style="top:397px;font-weight:bold;color:#ff0000;left:366px;letter-spacing:0.45px;">1</div><div class="a " style="top:397px;font-weight:bold;color:#ff0000;left:393px;letter-spacing:0.45px;">Position</div><div class="a " style="top:397px;font-weight:bold;color:#ff0000;left:91.44999999999999px;width:400px;text-align:right;letter-spacing:0.45px;">3</div><div class="a " style="top:397px;font-weight:bold;color:#ff0000;left:527px;letter-spacing:0.45px;">Trocknungsarbeiten</div><div class="a " style="top:397px;font-weight:bold;color:#ff0000;left:571.45px;width:400px;text-align:right;letter-spacing:0.45px;">0,00 €</div><div class="a " style="top:397px;font-weight:bold;color:#ff0000;left:635.45px;width:400px;text-align:right;letter-spacing:0.45px;">0,00 €</div><div class="a " style="top:397px;font-weight:bold;color:#ff0000;left:743.45px;width:400px;text-align:right;letter-spacing:0.45px;">0,00 €</div><div class="a " style="top:428px;color:#008000;left:288px;">Hinweistext</div><div class="a " style="top:428px;color:#008000;left:527px;">Entfernen und Entsorgen</div><div class="a " style="top:441px;color:#008000;left:527px;">alter Wandbeläge (Papiert...</div><div class="a " style="top:459px;color:#008000;left:288px;">Hinweistext</div><div class="a " style="top:459px;color:#008000;left:527px;">Trocknen einer durchnässten</div><div class="a " style="top:472px;color:#008000;left:527px;">Wand mit Bautrockner.</div><div class="a " style="top:490px;color:#ff0000;left:284px;">...</div><div class="a " style="top:490px;color:#ff0000;left:527px;">...</div><div class="a " style="top:521px;color:#008000;left:283px;">Gliederungstext</div><div class="a " style="top:521px;color:#008000;left:527px;">Tapezierarbeiten (nach</div><div class="a " style="top:534px;color:#008000;left:527px;">vollständiger Trocknung d...</div><div class="a " style="top:552px;color:#0000ff;left:283px;">Artikel</div><div class="a " style="top:552px;color:#0000ff;left:366px;">2</div><div class="a " style="top:552px;color:#0000ff;left:393px;">m-ab 001</div><div class="a " style="top:552px;color:#0000ff;left:91px;width:400px;text-align:right;">16</div><div class="a " style="top:552px;color:#0000ff;left:309px;width:400px;text-align:center;">m²</div><div class="a " style="top:552px;color:#0000ff;left:527px;">Abdeckpapier 130 g</div><div class="a " style="top:565px;color:#0000ff;left:527px;">Hergestellt nach neuesten</div><div class="a " style="top:552px;color:#0000ff;left:571px;width:400px;text-align:right;">0,13 €</div><div class="a " style="top:552px;color:#0000ff;left:635px;width:400px;text-align:right;">0,10 €</div><div class="a " style="top:552px;color:#0000ff;left:743px;width:400px;text-align:right;">2,08 €</div><div class="a " style="top:583px;color:#0000ff;left:283px;">Set</div><div class="a " style="top:583px;color:#0000ff;left:366px;">3</div><div class="a " style="top:583px;color:#0000ff;left:393px;">m-ta 210</div><div class="a " style="top:583px;color:#0000ff;left:91px;width:400px;text-align:right;">45</div><div class="a " style="top:583px;color:#0000ff;left:309px;width:400px;text-align:center;">m²</div><div class="a " style="top:583px;color:#0000ff;left:527px;">auf die vorbereiteten</div><div class="a " style="top:596px;color:#0000ff;left:527px;">Flächen schwere Papierta...</div><div class="a " style="top:583px;color:#0000ff;left:355px;width:400px;text-align:right;">9,3</div><div class="a " style="top:583px;color:#0000ff;left:415px;width:400px;text-align:right;">0,155</div><div class="a " style="top:583px;color:#0000ff;left:475px;width:400px;text-align:right;">6 h 58 min</div><div class="a " style="top:583px;color:#0000ff;left:530px;width:400px;text-align:right;">6,81 €</div><div class="a " style="top:583px;color:#0000ff;left:571px;width:400px;text-align:right;">7,10 €</div><div class="a " style="top:583px;color:#0000ff;left:635px;width:400px;text-align:right;">6,53 €</div><div class="a " style="top:583px;color:#0000ff;left:692px;width:400px;text-align:right;">306,45 €</div><div class="a " style="top:583px;color:#0000ff;left:743px;width:400px;text-align:right;">319,50 €</div><div class="a " style="top:614px;color:#ff0000;left:284px;">...</div><div class="a " style="top:614px;color:#ff0000;left:527px;">...</div><div class="a " style="top:614px;color:#ff0000;left:475px;width:400px;text-align:right;">6 h 58 min</div><div class="a " style="top:614px;color:#ff0000;left:692px;width:400px;text-align:right;">306,45 €</div><div class="a " style="top:614px;color:#ff0000;left:743px;width:400px;text-align:right;">321,58 €</div><div class="a " style="top:704px;font-weight:bold;left:230px;letter-spacing:-0.25px">Zahlungsart *</div><div class="b" style="left:230px;top:717px;width:533px;height:16px;background:#f0f0f0;border:1px solid #000"></div><div class="b" style="left:746px;top:718px;width:16px;height:14px;background:#fff;border-left:1px solid #aaa"></div><svg style="left:750px;top:721px" width="8" height="8" viewBox="0 0 8 8"><path d="M1 1L7 7M7 1L1 7" stroke="#ff5050" stroke-width="1.2"/></svg><div class="a " style="top:719px;left:232px;font-size:10px;letter-spacing:-0.3px">Zahlbar innerhalb von 14 Tagen ohne Abzug</div><div class="a " style="top:704px;font-weight:bold;left:767px;letter-spacing:-0.25px">GP Summe</div><div class="a " style="top:704px;font-weight:bold;left:835px;letter-spacing:-0.25px">Rabattfähig</div><div class="a " style="top:704px;font-weight:bold;left:903px;letter-spacing:-0.25px">± % *</div><div class="a " style="top:704px;font-weight:bold;left:943px;letter-spacing:-0.25px">Netto</div><div class="a " style="top:704px;font-weight:bold;left:1011px;letter-spacing:-0.25px">USt.</div><div class="a " style="top:704px;font-weight:bold;left:1079px;letter-spacing:-0.25px">Brutto</div><div class="b" style="left:767px;top:717px;width:380px;height:16px;background:#fff;border:1px solid #000"></div><div class="b" style="left:835px;top:718px;width:1px;height:14px;background:#000"></div><div class="b" style="left:903px;top:718px;width:1px;height:14px;background:#000"></div><div class="b" style="left:943px;top:718px;width:1px;height:14px;background:#000"></div><div class="b" style="left:1011px;top:718px;width:1px;height:14px;background:#000"></div><div class="b" style="left:1079px;top:718px;width:1px;height:14px;background:#000"></div><div class="b" style="left:836px;top:718px;width:67px;height:14px;background:#f0f0f0"></div><div class="b" style="left:944px;top:718px;width:67px;height:14px;background:#f0f0f0"></div><div class="b" style="left:1012px;top:718px;width:67px;height:14px;background:#f0f0f0"></div><div class="a " style="top:719px;left:769px;font-size:10px;letter-spacing:-0.25px">321,58 €</div><div class="a " style="top:719px;left:837px;font-size:10px;letter-spacing:-0.25px">321,58 €</div><div class="a " style="top:719px;left:945px;font-size:10px;letter-spacing:-0.25px">321,58 €</div><div class="a " style="top:719px;left:1013px;font-size:10px;letter-spacing:-0.25px">61,10 €</div><div class="a " style="top:719px;left:1081px;font-size:10px;letter-spacing:-0.25px">382,68 €</div><div class="b" style="left:1163px;top:145px;width:108px;height:151px;background:#dfdfdf;border:1px solid #aca899"></div><div class="b" style="left:1164px;top:146px;width:106px;height:20px;background:#bfbfbf;border-bottom:1px solid #b0b0b0"></div><div class="a " style="top:150px;left:1170px;font-size:10.5px;color:#505060;letter-spacing:0px">Übersicht</div><svg style="left:1255px;top:154px" width="5" height="3" viewBox="0 0 5 3"><path d="M0 3L2.5 0 5 3z" fill="#333"/></svg><div class="a " style="top:169px;left:1167px;font-size:9.5px;letter-spacing:-0.15px;color:#000">Modus *</div><div class="b" style="left:1211px;top:169px;width:56px;height:11px;background:#ffffff"></div><div class="a " style="top:181px;left:1167px;font-size:9.5px;letter-spacing:-0.15px;color:#000">Kennung</div><div class="b" style="left:1211px;top:181px;width:56px;height:11px;background:#ffffff"></div><div class="a " style="top:193px;left:1167px;font-size:9.5px;letter-spacing:-0.15px;color:#000">OZ</div><div class="b" style="left:1211px;top:193px;width:56px;height:11px;background:#ffffff"></div><div class="a " style="top:205px;left:1167px;font-size:9.5px;letter-spacing:-0.15px;color:#000">Nummer</div><div class="b" style="left:1211px;top:205px;width:56px;height:11px;background:#f2f2f2"></div><div class="a " style="top:217px;left:1167px;font-size:9.5px;letter-spacing:-0.15px;color:#000">Menge</div><div class="b" style="left:1211px;top:217px;width:56px;height:11px;background:#ffffff"></div><div class="b" style="left:1243px;top:217px;width:1px;height:11px;background:#d4d4d4"></div><div class="a " style="top:229px;left:1167px;font-size:9.5px;letter-spacing:-0.15px;color:#000">Verbrauch</div><div class="b" style="left:1211px;top:229px;width:56px;height:11px;background:#ffffff"></div><div class="b" style="left:1243px;top:229px;width:1px;height:11px;background:#d4d4d4"></div><div class="a " style="top:241px;left:1167px;font-size:9.5px;letter-spacing:-0.15px;color:#000">± % VK</div><div class="b" style="left:1211px;top:241px;width:56px;height:11px;background:#ffffff"></div><div class="a " style="top:257px;left:1167px;font-size:9.5px;letter-spacing:-0.15px;color:#000">EK Total</div><div class="b" style="left:1211px;top:257px;width:56px;height:11px;background:#f2f2f2"></div><div class="a " style="top:269px;left:1167px;font-size:9.5px;letter-spacing:-0.15px;color:#000">VK Total</div><div class="b" style="left:1211px;top:269px;width:56px;height:11px;background:#ffffff"></div><div class="a " style="top:281px;left:1167px;font-size:9.5px;letter-spacing:-0.15px;color:#000">Zuschlag</div><div class="b" style="left:1211px;top:281px;width:56px;height:11px;background:#ffffff"></div><div class="b" style="left:1163px;top:305px;width:108px;height:99px;background:#dfdfdf;border:1px solid #aca899"></div><div class="b" style="left:1164px;top:306px;width:106px;height:20px;background:#bfbfbf;border-bottom:1px solid #b0b0b0"></div><div class="a " style="top:310px;left:1170px;font-size:10.5px;color:#505060;letter-spacing:0px">Material</div><svg style="left:1255px;top:314px" width="5" height="3" viewBox="0 0 5 3"><path d="M0 3L2.5 0 5 3z" fill="#333"/></svg><div class="a " style="top:329px;left:1167px;font-size:9.5px;letter-spacing:-0.15px;color:#000">LP/Einh</div><div class="b" style="left:1211px;top:329px;width:56px;height:11px;background:#ffffff"></div><div class="a " style="top:341px;left:1167px;font-size:9.5px;letter-spacing:-0.15px;color:#000">Bez.-Rab.</div><div class="b" style="left:1211px;top:341px;width:56px;height:11px;background:#ffffff"></div><div class="a " style="top:353px;left:1167px;font-size:9.5px;letter-spacing:-0.15px;color:#000">EK/Einh</div><div class="b" style="left:1211px;top:353px;width:56px;height:11px;background:#ffffff"></div><div class="a " style="top:365px;left:1167px;font-size:9.5px;letter-spacing:-0.15px;color:#000">EK Total</div><div class="b" style="left:1211px;top:365px;width:56px;height:11px;background:#f2f2f2"></div><div class="a " style="top:377px;left:1167px;font-size:9.5px;letter-spacing:-0.15px;color:#000">VK Total</div><div class="b" style="left:1211px;top:377px;width:56px;height:11px;background:#f2f2f2"></div><div class="a " style="top:389px;left:1167px;font-size:9.5px;letter-spacing:-0.15px;color:#000">Faktor</div><div class="b" style="left:1211px;top:389px;width:56px;height:11px;background:#f2f2f2"></div><div class="b" style="left:1163px;top:413px;width:108px;height:63px;background:#dfdfdf;border:1px solid #aca899"></div><div class="b" style="left:1164px;top:414px;width:106px;height:20px;background:#bfbfbf;border-bottom:1px solid #b0b0b0"></div><div class="a " style="top:418px;left:1170px;font-size:10.5px;color:#505060;letter-spacing:0px">Lohn</div><svg style="left:1255px;top:422px" width="5" height="3" viewBox="0 0 5 3"><path d="M0 3L2.5 0 5 3z" fill="#333"/></svg><div class="a " style="top:437px;left:1167px;font-size:9.5px;letter-spacing:-0.15px;color:#000">EK Total</div><div class="b" style="left:1211px;top:437px;width:56px;height:11px;background:#f2f2f2"></div><div class="a " style="top:449px;left:1167px;font-size:9.5px;letter-spacing:-0.15px;color:#000">VK Total</div><div class="b" style="left:1211px;top:449px;width:56px;height:11px;background:#f2f2f2"></div><div class="a " style="top:461px;left:1167px;font-size:9.5px;letter-spacing:-0.15px;color:#000">VSatz / h</div><div class="b" style="left:1211px;top:461px;width:56px;height:11px;background:#f2f2f2"></div><div class="b" style="left:1163px;top:485px;width:108px;height:75px;background:#dfdfdf;border:1px solid #aca899"></div><div class="b" style="left:1164px;top:486px;width:106px;height:20px;background:#bfbfbf;border-bottom:1px solid #b0b0b0"></div><div class="a " style="top:490px;left:1170px;font-size:10.5px;color:#505060;letter-spacing:0px">Rest</div><svg style="left:1255px;top:494px" width="5" height="3" viewBox="0 0 5 3"><path d="M0 3L2.5 0 5 3z" fill="#333"/></svg><div class="a " style="top:509px;left:1167px;font-size:9.5px;letter-spacing:-0.15px;color:#000">EK Rohst.</div><div class="b" style="left:1211px;top:509px;width:56px;height:11px;background:#f2f2f2"></div><div class="a " style="top:521px;left:1167px;font-size:9.5px;letter-spacing:-0.15px;color:#000">VK Rohst.</div><div class="b" style="left:1211px;top:521px;width:56px;height:11px;background:#f2f2f2"></div><div class="a " style="top:533px;left:1167px;font-size:9.5px;letter-spacing:-0.15px;color:#000">EK Sonst.</div><div class="b" style="left:1211px;top:533px;width:56px;height:11px;background:#f2f2f2"></div><div class="a " style="top:545px;left:1167px;font-size:9.5px;letter-spacing:-0.15px;color:#000">VK Sonst.</div><div class="b" style="left:1211px;top:545px;width:56px;height:11px;background:#f2f2f2"></div><div class="b" style="left:1163px;top:569px;width:108px;height:76px;background:#dfdfdf;border:1px solid #aca899"></div><div class="b" style="left:1164px;top:570px;width:106px;height:20px;background:#bfbfbf;border-bottom:1px solid #b0b0b0"></div><div class="a " style="top:574px;left:1170px;font-size:10.5px;color:#505060;letter-spacing:0px">Zeit</div><svg style="left:1255px;top:578px" width="5" height="3" viewBox="0 0 5 3"><path d="M0 3L2.5 0 5 3z" fill="#333"/></svg><div class="a " style="top:593px;left:1167px;font-size:9.5px;letter-spacing:-0.15px;color:#000">Min/Einh</div><div class="b" style="left:1211px;top:593px;width:56px;height:11px;background:#ffffff"></div><div class="a " style="top:605px;left:1167px;font-size:9.5px;letter-spacing:-0.15px;color:#000">Zeit Ges.</div><div class="b" style="left:1211px;top:605px;width:56px;height:11px;background:#ffffff"></div><div class="a " style="top:617px;left:1167px;font-size:9.5px;letter-spacing:-0.15px;color:#000">Manntage</div><div class="b" style="left:1211px;top:617px;width:56px;height:11px;background:#ffffff"></div><div class="a " style="top:629px;left:1167px;font-size:9.5px;letter-spacing:-0.15px;color:#000">Leistg. / h</div><div class="b" style="left:1211px;top:629px;width:56px;height:11px;background:#f2f2f2"></div><div class="b" style="left:1243px;top:629px;width:1px;height:11px;background:#d4d4d4"></div><div class="b" style="left:1163px;top:653px;width:108px;height:88px;background:#dfdfdf;border:1px solid #aca899"></div><div class="b" style="left:1164px;top:654px;width:106px;height:20px;background:#bfbfbf;border-bottom:1px solid #b0b0b0"></div><div class="a " style="top:658px;left:1170px;font-size:10.5px;color:#505060;letter-spacing:0px">DB</div><svg style="left:1255px;top:662px" width="5" height="3" viewBox="0 0 5 3"><path d="M0 3L2.5 0 5 3z" fill="#333"/></svg><div class="a " style="top:677px;left:1167px;font-size:9.5px;letter-spacing:-0.15px;color:#000">DB I</div><div class="b" style="left:1211px;top:677px;width:56px;height:11px;background:#ffffff"></div><div class="a " style="top:689px;left:1167px;font-size:9.5px;letter-spacing:-0.15px;color:#000">DB I / h</div><div class="b" style="left:1211px;top:689px;width:56px;height:11px;background:#ffffff"></div><div class="a " style="top:701px;left:1167px;font-size:9.5px;letter-spacing:-0.15px;color:#000">DB I %</div><div class="b" style="left:1211px;top:701px;width:56px;height:11px;background:#f2f2f2"></div><div class="a " style="top:713px;left:1167px;font-size:9.5px;letter-spacing:-0.15px;color:#000">DB II</div><div class="b" style="left:1211px;top:713px;width:56px;height:11px;background:#f2f2f2"></div><div class="a " style="top:725px;left:1167px;font-size:9.5px;letter-spacing:-0.15px;color:#000">DB II / h</div><div class="b" style="left:1211px;top:725px;width:56px;height:11px;background:#f2f2f2"></div>
</body></html>
